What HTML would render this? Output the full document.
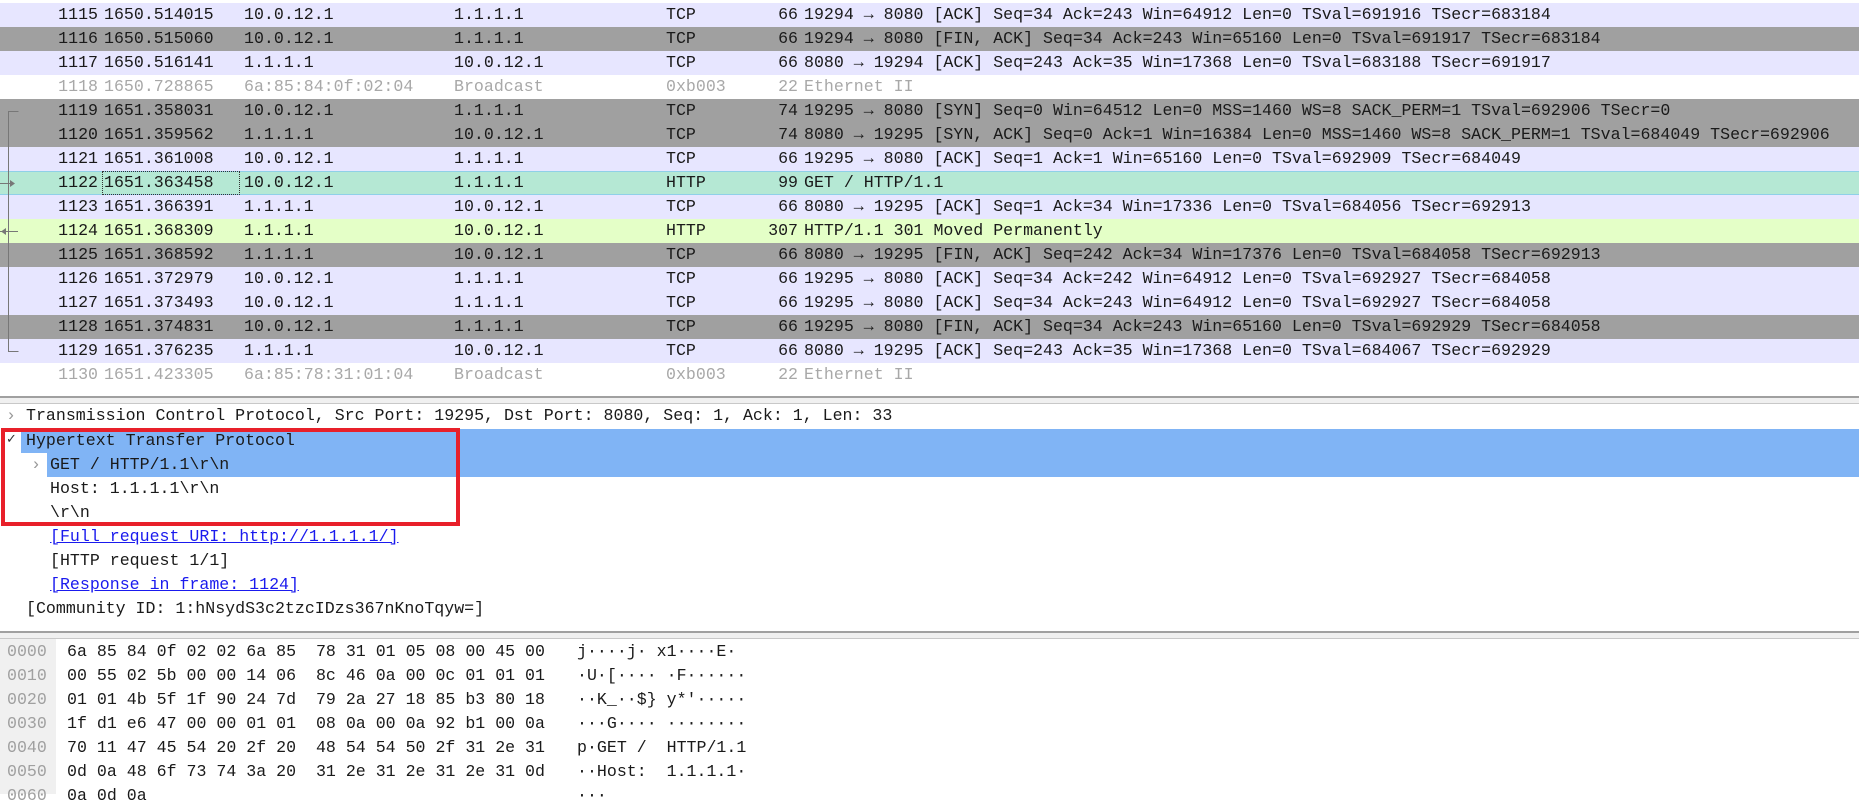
<!DOCTYPE html>
<html><head><meta charset="utf-8"><style>
body{margin:0;width:1859px;height:794px;overflow:hidden;background:#fff;font-family:"Liberation Mono",monospace;font-size:16.6px;color:#1a1a1a;position:relative}
.r{position:absolute;left:0;width:1859px;height:24px;line-height:24px;white-space:pre}
.r span{position:absolute;top:0}
.L{background:#e7e6ff}.G{background:#a0a0a0}.W{background:#fff;color:#a8a8a8}
.S{background:#b5e8d4;box-shadow:inset 0 1px 0 #8fd0e8,inset 0 -1px 0 #8fd0e8}
.Y{background:#e4ffc7}
.no{left:52px;width:46px;text-align:right}
.t{left:104px}.s{left:244px}.d{left:454px}.p{left:666px}
.ln{left:738px;width:60px;text-align:right}.i{left:804px}
.dt{position:absolute;white-space:pre;line-height:24px;height:24px}
a{color:#1a1aee;text-decoration:underline}
.hx{position:absolute;left:0;width:1859px;height:24px;line-height:24px;white-space:pre}
.hx span{position:absolute;top:0}
</style></head><body>
<div class="r L" style="top:3px"><span class="no">1115</span><span class="t">1650.514015</span><span class="s">10.0.12.1</span><span class="d">1.1.1.1</span><span class="p">TCP</span><span class="ln">66</span><span class="i">19294 → 8080 [ACK] Seq=34 Ack=243 Win=64912 Len=0 TSval=691916 TSecr=683184</span></div>
<div class="r G" style="top:27px"><span class="no">1116</span><span class="t">1650.515060</span><span class="s">10.0.12.1</span><span class="d">1.1.1.1</span><span class="p">TCP</span><span class="ln">66</span><span class="i">19294 → 8080 [FIN, ACK] Seq=34 Ack=243 Win=65160 Len=0 TSval=691917 TSecr=683184</span></div>
<div class="r L" style="top:51px"><span class="no">1117</span><span class="t">1650.516141</span><span class="s">1.1.1.1</span><span class="d">10.0.12.1</span><span class="p">TCP</span><span class="ln">66</span><span class="i">8080 → 19294 [ACK] Seq=243 Ack=35 Win=17368 Len=0 TSval=683188 TSecr=691917</span></div>
<div class="r W" style="top:75px"><span class="no">1118</span><span class="t">1650.728865</span><span class="s">6a:85:84:0f:02:04</span><span class="d">Broadcast</span><span class="p">0xb003</span><span class="ln">22</span><span class="i">Ethernet II</span></div>
<div class="r G" style="top:99px"><span class="no">1119</span><span class="t">1651.358031</span><span class="s">10.0.12.1</span><span class="d">1.1.1.1</span><span class="p">TCP</span><span class="ln">74</span><span class="i">19295 → 8080 [SYN] Seq=0 Win=64512 Len=0 MSS=1460 WS=8 SACK_PERM=1 TSval=692906 TSecr=0</span></div>
<div class="r G" style="top:123px"><span class="no">1120</span><span class="t">1651.359562</span><span class="s">1.1.1.1</span><span class="d">10.0.12.1</span><span class="p">TCP</span><span class="ln">74</span><span class="i">8080 → 19295 [SYN, ACK] Seq=0 Ack=1 Win=16384 Len=0 MSS=1460 WS=8 SACK_PERM=1 TSval=684049 TSecr=692906</span></div>
<div class="r L" style="top:147px"><span class="no">1121</span><span class="t">1651.361008</span><span class="s">10.0.12.1</span><span class="d">1.1.1.1</span><span class="p">TCP</span><span class="ln">66</span><span class="i">19295 → 8080 [ACK] Seq=1 Ack=1 Win=65160 Len=0 TSval=692909 TSecr=684049</span></div>
<div class="r S" style="top:171px"><span class="no">1122</span><span class="t" style="outline:1px dotted #333;outline-offset:-1px;width:136px;left:102px;padding-left:2px">1651.363458</span><span class="s">10.0.12.1</span><span class="d">1.1.1.1</span><span class="p">HTTP</span><span class="ln">99</span><span class="i">GET / HTTP/1.1</span></div>
<div class="r L" style="top:195px"><span class="no">1123</span><span class="t">1651.366391</span><span class="s">1.1.1.1</span><span class="d">10.0.12.1</span><span class="p">TCP</span><span class="ln">66</span><span class="i">8080 → 19295 [ACK] Seq=1 Ack=34 Win=17336 Len=0 TSval=684056 TSecr=692913</span></div>
<div class="r Y" style="top:219px"><span class="no">1124</span><span class="t">1651.368309</span><span class="s">1.1.1.1</span><span class="d">10.0.12.1</span><span class="p">HTTP</span><span class="ln">307</span><span class="i">HTTP/1.1 301 Moved Permanently</span></div>
<div class="r G" style="top:243px"><span class="no">1125</span><span class="t">1651.368592</span><span class="s">1.1.1.1</span><span class="d">10.0.12.1</span><span class="p">TCP</span><span class="ln">66</span><span class="i">8080 → 19295 [FIN, ACK] Seq=242 Ack=34 Win=17376 Len=0 TSval=684058 TSecr=692913</span></div>
<div class="r L" style="top:267px"><span class="no">1126</span><span class="t">1651.372979</span><span class="s">10.0.12.1</span><span class="d">1.1.1.1</span><span class="p">TCP</span><span class="ln">66</span><span class="i">19295 → 8080 [ACK] Seq=34 Ack=242 Win=64912 Len=0 TSval=692927 TSecr=684058</span></div>
<div class="r L" style="top:291px"><span class="no">1127</span><span class="t">1651.373493</span><span class="s">10.0.12.1</span><span class="d">1.1.1.1</span><span class="p">TCP</span><span class="ln">66</span><span class="i">19295 → 8080 [ACK] Seq=34 Ack=243 Win=64912 Len=0 TSval=692927 TSecr=684058</span></div>
<div class="r G" style="top:315px"><span class="no">1128</span><span class="t">1651.374831</span><span class="s">10.0.12.1</span><span class="d">1.1.1.1</span><span class="p">TCP</span><span class="ln">66</span><span class="i">19295 → 8080 [FIN, ACK] Seq=34 Ack=243 Win=65160 Len=0 TSval=692929 TSecr=684058</span></div>
<div class="r L" style="top:339px"><span class="no">1129</span><span class="t">1651.376235</span><span class="s">1.1.1.1</span><span class="d">10.0.12.1</span><span class="p">TCP</span><span class="ln">66</span><span class="i">8080 → 19295 [ACK] Seq=243 Ack=35 Win=17368 Len=0 TSval=684067 TSecr=692929</span></div>
<div class="r W" style="top:363px"><span class="no">1130</span><span class="t">1651.423305</span><span class="s">6a:85:78:31:01:04</span><span class="d">Broadcast</span><span class="p">0xb003</span><span class="ln">22</span><span class="i">Ethernet II</span></div>
<svg style="position:absolute;left:0;top:0" width="30" height="390">
<path d="M18.5 111.5H8.5V351.5H18.5" fill="none" stroke="#777" stroke-width="1"/>
<path d="M0 183.5H14" stroke="#777"/><path d="M10 180L15 183.5L10 187Z" fill="#777"/>
<path d="M0 231.5H18" stroke="#777"/><path d="M6 228L1 231.5L6 235Z" fill="#777"/>
</svg>
<div style="position:absolute;left:0;top:396px;width:1859px;height:8px;background:#f0f0f0;border-top:2px solid #a0a0a0;border-bottom:1px solid #c8c8c8;box-sizing:border-box"></div>
<div style="position:absolute;left:21px;top:429px;width:1838px;height:24px;background:#80b4f5"></div>
<div style="position:absolute;left:47px;top:453px;width:1812px;height:24px;background:#80b4f5"></div>
<div class="dt" style="left:6px;top:404px;color:#999">›</div>
<div class="dt" style="left:26px;top:404px">Transmission Control Protocol, Src Port: 19295, Dst Port: 8080, Seq: 1, Ack: 1, Len: 33</div>
<div class="dt" style="left:6px;top:428px;color:#333;font-size:13px">✓</div>
<div class="dt" style="left:26px;top:429px">Hypertext Transfer Protocol</div>
<div class="dt" style="left:31px;top:453px;color:#999">›</div>
<div class="dt" style="left:50px;top:453px">GET / HTTP/1.1\r\n</div>
<div class="dt" style="left:50px;top:477px">Host: 1.1.1.1\r\n</div>
<div class="dt" style="left:50px;top:501px">\r\n</div>
<div class="dt" style="left:50px;top:525px"><a>[Full request URI: http://1.1.1.1/]</a></div>
<div class="dt" style="left:50px;top:549px">[HTTP request 1/1]</div>
<div class="dt" style="left:50px;top:573px"><a>[Response in frame: 1124]</a></div>
<div class="dt" style="left:26px;top:597px">[Community ID: 1:hNsydS3c2tzcIDzs367nKnoTqyw=]</div>
<div style="position:absolute;left:1px;top:428px;width:459px;height:98px;border:4px solid #e8202a;box-sizing:border-box"></div>
<div style="position:absolute;left:0;top:631px;width:1859px;height:8px;background:#f0f0f0;border-top:2px solid #a0a0a0;border-bottom:1px solid #c8c8c8;box-sizing:border-box"></div>
<div style="position:absolute;left:0;top:639px;width:56px;height:155px;background:#f0f0f0"></div>
<div class="hx" style="top:640px"><span style="left:7px;color:#a0a0a0">0000</span><span style="left:67px">6a 85 84 0f 02 02 6a 85  78 31 01 05 08 00 45 00</span><span style="left:577px">j····j· x1····E·</span></div>
<div class="hx" style="top:664px"><span style="left:7px;color:#a0a0a0">0010</span><span style="left:67px">00 55 02 5b 00 00 14 06  8c 46 0a 00 0c 01 01 01</span><span style="left:577px">·U·[···· ·F······</span></div>
<div class="hx" style="top:688px"><span style="left:7px;color:#a0a0a0">0020</span><span style="left:67px">01 01 4b 5f 1f 90 24 7d  79 2a 27 18 85 b3 80 18</span><span style="left:577px">··K_··$} y*'·····</span></div>
<div class="hx" style="top:712px"><span style="left:7px;color:#a0a0a0">0030</span><span style="left:67px">1f d1 e6 47 00 00 01 01  08 0a 00 0a 92 b1 00 0a</span><span style="left:577px">···G···· ········</span></div>
<div class="hx" style="top:736px"><span style="left:7px;color:#a0a0a0">0040</span><span style="left:67px">70 11 47 45 54 20 2f 20  48 54 54 50 2f 31 2e 31</span><span style="left:577px">p·GET /  HTTP/1.1</span></div>
<div class="hx" style="top:760px"><span style="left:7px;color:#a0a0a0">0050</span><span style="left:67px">0d 0a 48 6f 73 74 3a 20  31 2e 31 2e 31 2e 31 0d</span><span style="left:577px">··Host:  1.1.1.1·</span></div>
<div class="hx" style="top:784px"><span style="left:7px;color:#a0a0a0">0060</span><span style="left:67px">0a 0d 0a</span><span style="left:577px">···</span></div>
</body></html>
